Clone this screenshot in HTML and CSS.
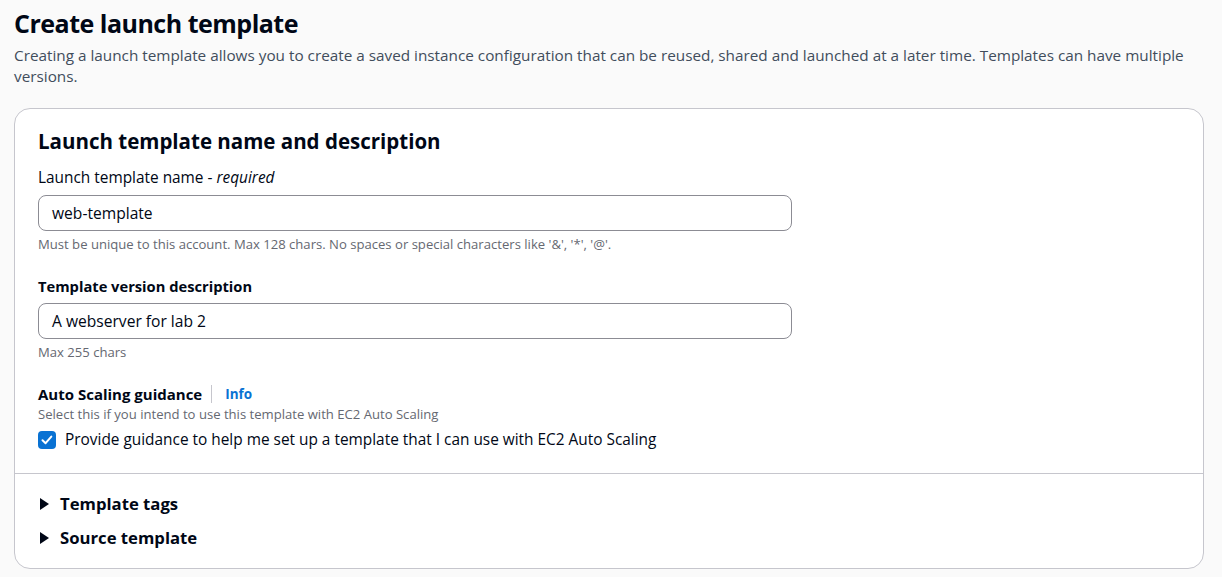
FILE: index.html
```html
<!DOCTYPE html>
<html>
<head>
<meta charset="utf-8">
<link rel="stylesheet" href="styles.css">
</head>
<body>
<div class="page">
  <h1 class="title">Create launch template</h1>
  <p class="intro">Creating a launch template allows you to create a saved instance configuration that can be reused, shared and launched at a later time. Templates can have multiple versions.</p>
  <div class="card">
    <div class="card-body">
      <h2 class="card-title">Launch template name and description</h2>
      <div class="field">
        <label class="label">Launch template name - <i>required</i></label>
        <div class="input">web-template</div>
        <div class="hint">Must be unique to this account. Max 128 chars. No spaces or special characters like '&amp;', '*', '@'.</div>
      </div>
      <div class="field">
        <label class="label bold">Template version description</label>
        <div class="input">A webserver for lab 2</div>
        <div class="hint">Max 255 chars</div>
      </div>
      <div class="field asg">
        <div class="label-row"><span class="label bold asg-label">Auto Scaling guidance</span><span class="divider"></span><a class="info">Info</a></div>
        <div class="hint desc">Select this if you intend to use this template with EC2 Auto Scaling</div>
        <div class="check-row">
          <span class="checkbox"><svg width="18" height="18" viewBox="0 0 18 18"><path d="M4.5 9.2 L7.6 12.2 L13.3 5.6" fill="none" stroke="#fff" stroke-width="2" stroke-linecap="round" stroke-linejoin="round"/></svg></span>
          <span class="check-text">Provide guidance to help me set up a template that I can use with EC2 Auto Scaling</span>
        </div>
      </div>
    </div>
    <div class="card-footer">
      <div class="expander"><span class="tri"></span>Template tags</div>
      <div class="expander"><span class="tri"></span>Source template</div>
    </div>
  </div>
</div>
</body>
</html>
```
FILE: styles.css
```css
* { box-sizing: border-box; }
html, body { margin: 0; padding: 0; }
body {
  background: #fafafa;
  font-family: "Open Sans", "Noto Sans", sans-serif;
  color: #000716;
  width: 1222px;
  height: 577px;
  overflow: hidden;
}
.page {
  padding: 4px 18px 0 14px;
}
.title {
  margin: 0;
  font-size: 25px;
  font-weight: 700;
  line-height: 38px;
  letter-spacing: -0.5px;
}
.intro {
  margin: 3px 0 0;
  font-size: 15.3px;
  line-height: 21px;
  color: #414d5c;
}
.card {
  margin-top: 21px;
  background: #fff;
  border: 1px solid #c6c6cd;
  border-radius: 16px;
  height: 461px;
}
.card-body {
  padding: 17px 23px 22px;
  border-bottom: 1px solid #c6c6cd;
}
.card-title {
  margin: 0;
  font-size: 20.5px;
  font-weight: 700;
  line-height: 30px;
}
.field { margin-top: 11px; }
.field + .field { margin-top: 22px; }
.label {
  display: block;
  font-size: 15.4px;
  line-height: 22px;
}
.label.bold { font-weight: 700; font-size: 14.7px; }
.label.asg-label { font-size: 15px; }
.input {
  margin-top: 6px;
  width: 754px;
  height: 36px;
  border: 1px solid #8c8c94;
  border-radius: 8px;
  padding: 0 13px;
  font-size: 15.6px;
  line-height: 34px;
}
.hint {
  margin-top: 4px;
  font-size: 13.1px;
  line-height: 18px;
  color: #656871;
}
.label-row {
  display: flex;
  align-items: center;
}
.divider {
  width: 1px;
  height: 18px;
  background: #c6c6cd;
  margin: 0 13px 0 9px;
}
.info {
  color: #0972d3;
  font-weight: 700;
  font-size: 13.5px;
  line-height: 22px;
}
.hint.desc { margin-top: 0; }
.check-row {
  display: flex;
  align-items: center;
  margin-top: 6px;
}
.checkbox {
  width: 18px;
  height: 18px;
  background: #0972d3;
  border-radius: 4px;
  display: flex;
}
.check-text {
  margin-left: 9px;
  font-size: 15.4px;
  line-height: 22px;
}
.card-footer {
  padding: 18px 23px 0;
}
.expander {
  display: flex;
  align-items: center;
  font-size: 16.7px;
  font-weight: 700;
  line-height: 24px;
}
.expander + .expander { margin-top: 10px; }
.tri {
  width: 0;
  height: 0;
  border-top: 6px solid transparent;
  border-bottom: 6px solid transparent;
  border-left: 9px solid #000716;
  margin: 0 11px 0 2px;
}
```
